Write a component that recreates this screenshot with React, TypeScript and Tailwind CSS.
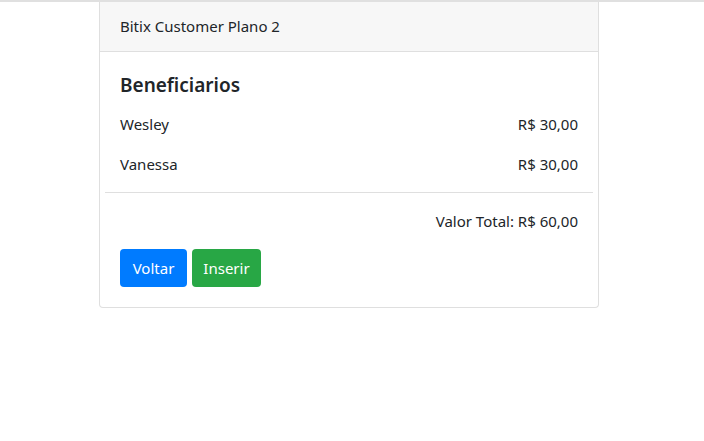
export default function App() {
  return (
    <div className="w-[704px] h-[441px] bg-white text-[#212529]" style={{ fontFamily: '"Noto Sans", "Open Sans", sans-serif' }}>
      <div className="h-[2px] bg-[#e0e0e0]" />
      <div className="ml-[99px] w-[500px] border border-[#dfdfdf] border-t-0 rounded-b-[4px]">
        <div className="h-[50px] bg-[#f7f7f7] border-b border-[#dfdfdf] flex items-center px-[20px] text-[15px]">
          Bitix Customer Plano 2
        </div>
        <div className="pt-[21px] pb-[20px]">
          <div className="px-[20px] text-[19px] font-semibold leading-[24px] mb-[15px]">Beneficiarios</div>
          <div className="px-[20px] flex justify-between text-[15px] leading-[24px] h-[40px]">
            <span>Wesley</span>
            <span>R$ 30,00</span>
          </div>
          <div className="px-[20px] flex justify-between text-[15px] leading-[24px] h-[24px]">
            <span>Vanessa</span>
            <span>R$ 30,00</span>
          </div>
          <div className="mx-[5px] mt-[16px] border-t border-[#dfdfdf]" />
          <div className="px-[20px] flex justify-end text-[15px] leading-[24px] mt-[16px]">
            Valor Total: R$ 60,00
          </div>
          <div className="px-[20px] flex gap-[5px] mt-[16px]">
            <button className="h-[38px] w-[67px] rounded-[4px] bg-[#007bff] text-white text-[15px]">Voltar</button>
            <button className="h-[38px] w-[69px] rounded-[4px] bg-[#28a745] text-white text-[15px]">Inserir</button>
          </div>
        </div>
      </div>
    </div>
  );
}
